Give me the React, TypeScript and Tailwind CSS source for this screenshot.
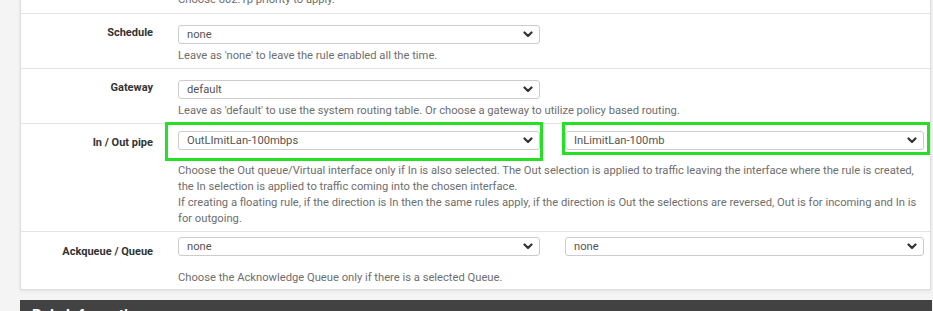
import React from "react";

const Chevron = () => (
  <svg width="10" height="7" viewBox="0 0 10 7" className="shrink-0">
    <polyline points="1.5,1.5 5,5 8.5,1.5" fill="none" stroke="#333" strokeWidth="2.2" strokeLinecap="round" strokeLinejoin="round" />
  </svg>
);

const Select = ({ value, width }: { value: string; width: string }) => (
  <div className={`${width} h-[19px] flex items-center justify-between pl-[8px] pr-[6px] border border-[#cccccc] rounded-[3px] bg-white text-[11.2px] text-[#555] leading-none`}>
    <span>{value}</span>
    <Chevron />
  </div>
);

const Help = ({ children, className = "" }: { children: React.ReactNode; className?: string }) => (
  <div className={`text-[11.2px] leading-[16px] text-[#6e6e6e] ${className}`}>{children}</div>
);

const Label = ({ text, pt }: { text: string; pt: string }) => (
  <div className={`w-[132px] shrink-0 text-right font-bold text-[11px] leading-[16px] text-[#333] ${pt}`}>{text}</div>
);

export default function App() {
  return (
    <div className="w-[933px] h-[311px] overflow-hidden bg-[#f4f4f4]" style={{ fontFamily: "Roboto, 'Liberation Sans', sans-serif" }}>
      <div className="ml-[20px] w-[911px] bg-white border-x border-b border-[#dddddd] shadow-[0_1px_3px_rgba(0,0,0,0.08)]">
        {/* cut-off priority row */}
        <div className="flex border-b border-[#e3e3e3] -mt-[8px] pb-[5px]">
          <div className="w-[132px] shrink-0" />
          <Help className="ml-[25px]">Choose 802.1p priority to apply.</Help>
        </div>

        {/* Schedule */}
        <div className="flex border-b border-[#e3e3e3] pb-[4px]">
          <Label text="Schedule" pt="pt-[11px]" />
          <div className="ml-[25px] pt-[11px]">
            <Select value="none" width="w-[362px]" />
            <Help className="mt-[4px]">Leave as 'none' to leave the rule enabled all the time.</Help>
          </div>
        </div>

        {/* Gateway */}
        <div className="flex border-b border-[#e3e3e3] pb-[4px]">
          <Label text="Gateway" pt="pt-[11px]" />
          <div className="ml-[25px] pt-[11px]">
            <Select value="default" width="w-[362px]" />
            <Help className="mt-[4px]">
              Leave as 'default' to use the system routing table. Or choose a gateway to utilize policy based routing.
            </Help>
          </div>
        </div>

        {/* In / Out pipe */}
        <div className="flex border-b border-[#e3e3e3] pb-[4px]">
          <Label text="In / Out pipe" pt="pt-[11px]" />
          <div className="ml-[25px] pt-[7px]">
            <div className="flex gap-[25px]">
              <div className="relative">
                <Select value="OutLImitLan-100mbps" width="w-[362px]" />
                <div className="absolute -left-[13px] -top-[9px] -right-[3px] -bottom-[11px] border-[3px] border-[#25e025] pointer-events-none" />
              </div>
              <div className="relative">
                <Select value="InLimitLan-100mb" width="w-[359px]" />
                <div className="absolute -left-[3px] -top-[9px] -right-[6px] -bottom-[5px] border-[3px] border-[#25e025] pointer-events-none" />
              </div>
            </div>
            <Help className="mt-[13px] whitespace-nowrap">
              Choose the Out queue/Virtual interface only if In is also selected. The Out selection is applied to traffic leaving the interface where the rule is created,
              <br />
              the In selection is applied to traffic coming into the chosen interface.
              <br />
              If creating a floating rule, if the direction is In then the same rules apply, if the direction is Out the selections are reversed, Out is for incoming and In is
              <br />
              for outgoing.
            </Help>
          </div>
        </div>

        {/* Ackqueue / Queue */}
        <div className="flex pb-[3px]">
          <Label text="Ackqueue / Queue" pt="pt-[12px]" />
          <div className="ml-[25px] pt-[5px]">
            <div className="flex gap-[25px]">
              <Select value="none" width="w-[362px]" />
              <Select value="none" width="w-[359px]" />
            </div>
            <Help className="mt-[14px]">Choose the Acknowledge Queue only if there is a selected Queue.</Help>
          </div>
        </div>
      </div>

      <div className="ml-[20px] mt-[10px] w-[912px] h-[30px] bg-[#424242] pl-[12px] pt-[3px]">
        <span className="text-white font-bold text-[15px] leading-[18px]">Rule Information</span>
      </div>
    </div>
  );
}
